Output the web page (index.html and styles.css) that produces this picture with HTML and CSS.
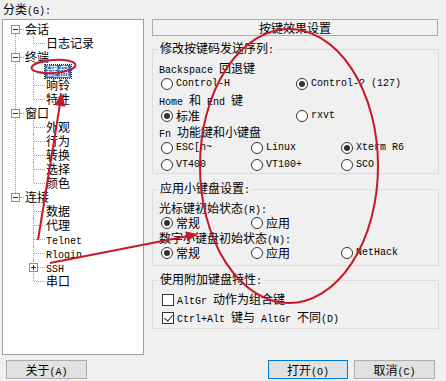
FILE: index.html
```html
<!DOCTYPE html>
<html lang="zh-CN">
  <head>
    <meta charset="UTF-8" />
    <meta name="viewport" content="width=device-width, initial-scale=1.0" />
    <title>PuTTY 配置 - 键盘</title>
    <link rel="stylesheet" href="styles.css">
  </head>
  <body>
    <div class="dialog">
      <div class="main">
        <div class="category">
          <div class="cat-label">分类<span class="en">(G):</span></div>
          <div class="tree-box">
            <ul class="tree">
              <li class="branch">
                <div class="row"><span class="toggle"></span>会话</div>
                <ul class="leaves">
                  <li><div class="row">日志记录</div></li>
                </ul>
              </li>
              <li class="branch">
                <div class="row"><span class="toggle"></span>终端</div>
                <ul class="leaves">
                  <li><div class="row"><span class="sel">键盘</span></div></li>
                  <li><div class="row">响铃</div></li>
                  <li><div class="row">特性</div></li>
                </ul>
              </li>
              <li class="branch">
                <div class="row"><span class="toggle"></span>窗口</div>
                <ul class="leaves">
                  <li><div class="row">外观</div></li>
                  <li><div class="row">行为</div></li>
                  <li><div class="row">转换</div></li>
                  <li><div class="row">选择</div></li>
                  <li><div class="row">颜色</div></li>
                </ul>
              </li>
              <li class="branch">
                <div class="row"><span class="toggle"></span>连接</div>
                <ul class="leaves">
                  <li><div class="row">数据</div></li>
                  <li><div class="row">代理</div></li>
                  <li><div class="row"><span class="en">Telnet</span></div></li>
                  <li><div class="row"><span class="en">Rlogin</span></div></li>
                  <li><div class="row"><span class="toggle plus"></span><span class="en">SSH</span></div></li>
                  <li><div class="row">串口</div></li>
                </ul>
              </li>
            </ul>
          </div>
        </div>

        <div class="panel">
          <div class="panel-title">按键效果设置</div>

          <fieldset class="group g1">
            <legend>修改按键码发送序列<span class="en">:</span></legend>
            <div class="lbl"><span class="en">Backspace </span>回退键</div>
            <div class="opts two">
              <div class="opt"><span class="radio"></span><span class="en">Control-H</span></div>
              <div class="opt"><span class="radio on"></span><span class="en">Control-? (127)</span></div>
            </div>
            <div class="lbl"><span class="en">Home </span>和<span class="en"> End </span>键</div>
            <div class="opts two">
              <div class="opt"><span class="radio on"></span>标准</div>
              <div class="opt"><span class="radio"></span><span class="en">rxvt</span></div>
            </div>
            <div class="lbl"><span class="en">Fn </span>功能键和小键盘</div>
            <div class="opts">
              <div class="opt"><span class="radio"></span><span class="en">ESC[n~</span></div>
              <div class="opt"><span class="radio"></span><span class="en">Linux</span></div>
              <div class="opt"><span class="radio on"></span><span class="en">Xterm R6</span></div>
            </div>
            <div class="opts">
              <div class="opt"><span class="radio"></span><span class="en">VT400</span></div>
              <div class="opt"><span class="radio"></span><span class="en">VT100+</span></div>
              <div class="opt"><span class="radio"></span><span class="en">SCO</span></div>
            </div>
          </fieldset>

          <fieldset class="group g2">
            <legend>应用小键盘设置<span class="en">:</span></legend>
            <div class="lbl">光标键初始状态<span class="en">(R):</span></div>
            <div class="opts">
              <div class="opt"><span class="radio on"></span>常规</div>
              <div class="opt"><span class="radio"></span>应用</div>
            </div>
            <div class="lbl">数字小键盘初始状态<span class="en">(N):</span></div>
            <div class="opts">
              <div class="opt"><span class="radio on"></span>常规</div>
              <div class="opt"><span class="radio"></span>应用</div>
              <div class="opt"><span class="radio"></span><span class="en">NetHack</span></div>
            </div>
          </fieldset>

          <fieldset class="group g3">
            <legend>使用附加键盘特性<span class="en">:</span></legend>
            <div class="chk-row"><span class="check"></span><span><span class="en">AltGr </span>动作为组合键</span></div>
            <div class="chk-row"><span class="check on"></span><span><span class="en">Ctrl+Alt </span>键与<span class="en"> AltGr </span>不同<span class="en">(D)</span></span></div>
          </fieldset>
        </div>
      </div>

      <div class="footer">
        <button class="btn about">关于<span class="en">(A)</span></button>
        <button class="btn open default">打开<span class="en">(O)</span></button>
        <button class="btn cancel">取消<span class="en">(C)</span></button>
      </div>
    </div>

    <!-- red hand-drawn marks over the dialog -->
    <svg class="marks" width="446" height="381" viewBox="0 0 446 381">
      <ellipse cx="289" cy="166" rx="89" ry="137" />
      <ellipse cx="53.5" cy="66.5" rx="22" ry="6.5" transform="rotate(-4 53.5 66.5)" />
      <line x1="38" y1="240" x2="60" y2="104" />
      <polygon points="62,93 65.3,106.7 54.5,104.9" />
      <line x1="50" y1="263" x2="188" y2="236" />
      <polygon points="198,234 187.2,241.2 185.2,231.4" />
    </svg>
  </body>
</html>
```

FILE: styles.css
```css
* {
  margin: 0;
  padding: 0;
  box-sizing: border-box;
}

body {
  width: 446px;
  height: 381px;
  overflow: hidden;
  position: relative;
  background: #f0f0f0;
  color: #000;
  font: 12px/14px "Noto Sans CJK SC", sans-serif;
}

.en {
  font-family: "Liberation Mono", monospace;
  font-size: 10px;
}

.dialog {
  display: flex;
  flex-direction: column;
  height: 381px;
}

.main {
  display: flex;
  height: 355px;
}

/* left: category tree */
.category {
  width: 151px;
}

.cat-label {
  height: 19px;
  padding: 2px 0 0 3px;
}

.tree-box {
  margin-left: 2px;
  width: 142px;
  height: 336px;
  background: #fff;
  border: 1px solid #a0a0a0;
  padding-top: 2px;
}

.tree,
.leaves {
  list-style: none;
}

.branch,
.leaves > li {
  position: relative;
}

.branch:not(:last-child)::before {
  content: "";
  position: absolute;
  left: 12px;
  top: 7px;
  bottom: -7px;
  border-left: 1px dotted #a0a0a0;
}

.row {
  position: relative;
  height: 14px;
  line-height: 14px;
  padding-left: 22px;
  white-space: nowrap;
}

.branch > .row::after {
  content: "";
  position: absolute;
  left: 17px;
  width: 4px;
  top: 7px;
  border-top: 1px dotted #a0a0a0;
}

.leaves > li::before {
  content: "";
  position: absolute;
  left: 30px;
  top: 0;
  bottom: 0;
  border-left: 1px dotted #a0a0a0;
}

.leaves > li:last-child::before {
  bottom: 7px;
}

.leaves .row {
  padding-left: 43px;
}

.leaves .row::after {
  content: "";
  position: absolute;
  left: 31px;
  width: 11px;
  top: 7px;
  border-top: 1px dotted #a0a0a0;
}

.toggle {
  position: absolute;
  left: 8px;
  top: 3px;
  width: 9px;
  height: 9px;
  border: 1px solid #919191;
  background: #fff;
  z-index: 1;
}

.toggle::before {
  content: "";
  position: absolute;
  left: 1px;
  top: 3px;
  width: 5px;
  border-top: 1px solid #333;
}

.toggle.plus {
  left: 26px;
}

.toggle.plus::after {
  content: "";
  position: absolute;
  left: 3px;
  top: 1px;
  height: 5px;
  border-left: 1px solid #333;
}

.sel {
  display: inline-block;
  margin-left: -1px;
  padding: 0 1px;
  height: 13px;
  line-height: 12px;
  background: #2f6fc4;
  color: #fff;
  outline: 1px dotted #222;
}

/* right: settings panel */
.panel {
  width: 295px;
  padding-top: 19px;
}

.panel-title {
  margin-left: 1px;
  width: 286px;
  height: 17px;
  line-height: 15px;
  text-align: center;
  border: 1px solid #adadad;
  background: #f2f2f2;
}

.group {
  margin-left: 1px;
  width: 287px;
  border: 1px solid #dcdcdc;
  padding: 2px 0 0 6px;
}

.group legend {
  padding: 0 1px;
  line-height: 14px;
}

.g1 {
  margin-top: 5px;
}

.g2 {
  margin-top: 7px;
  padding-bottom: 5px;
}

.g3 {
  margin-top: 6px;
  padding-bottom: 1px;
}

.lbl {
  height: 15px;
  line-height: 15px;
  white-space: nowrap;
}

.opts {
  display: grid;
  grid-template-columns: 90px 90px auto;
  height: 17px;
  padding-left: 2px;
}

.opts.two {
  grid-template-columns: 135px auto;
}

.g2 .opts {
  height: 15px;
}

.opt,
.chk-row {
  display: flex;
  align-items: center;
  white-space: nowrap;
}

.chk-row {
  height: 18px;
  padding-left: 3px;
}

.radio,
.check {
  position: relative;
  flex: none;
  width: 12px;
  height: 12px;
  margin-right: 3px;
  border: 1px solid #333;
  background: #fff;
}

.radio {
  border-radius: 50%;
}

.radio.on::after {
  content: "";
  position: absolute;
  left: 2px;
  top: 2px;
  width: 6px;
  height: 6px;
  border-radius: 50%;
  background: #333;
}

.check.on::after {
  content: "";
  position: absolute;
  left: 3px;
  top: 0;
  width: 4px;
  height: 7px;
  border: solid #333;
  border-width: 0 1px 1px 0;
  transform: rotate(40deg);
}

/* bottom buttons */
.footer {
  display: flex;
  padding-top: 5px;
}

.btn {
  height: 19px;
  font: inherit;
  line-height: 17px;
  color: #000;
  background: #e1e1e1;
  border: 1px solid #adadad;
}

.about {
  margin-left: 6px;
  width: 81px;
}

.open {
  margin-left: auto;
  width: 80px;
}

.cancel {
  margin-left: 6px;
  margin-right: 11px;
  width: 81px;
}

.btn.default {
  border-color: #0078d7;
  box-shadow: inset 0 0 0 1px #cce4f7;
}

.marks {
  position: absolute;
  top: 0;
  left: 0;
  pointer-events: none;
}

.marks ellipse,
.marks line {
  fill: none;
  stroke: #c8182a;
  stroke-width: 2;
}

.marks polygon {
  fill: #c8182a;
}
```
